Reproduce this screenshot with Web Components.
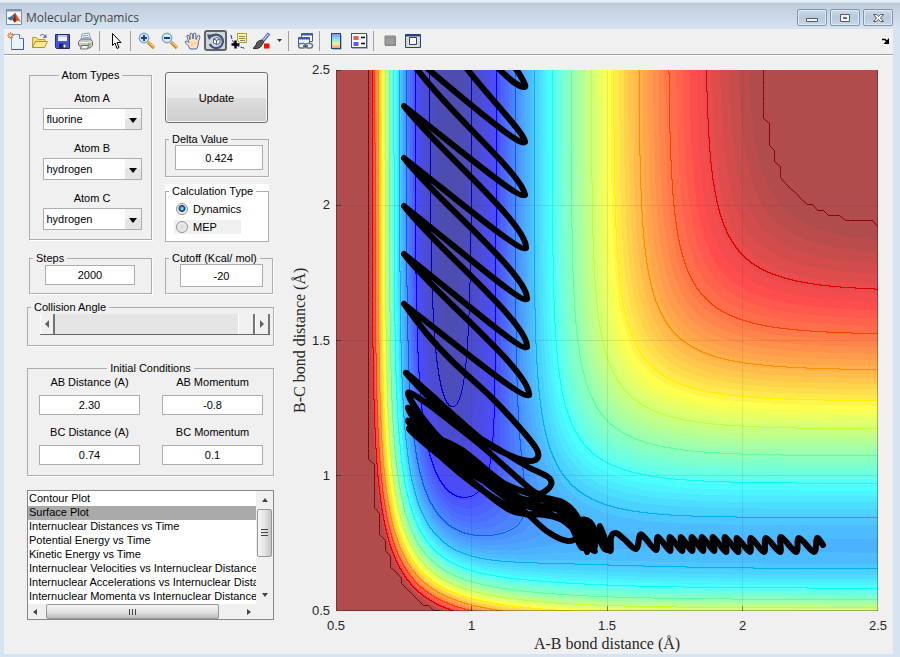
<!DOCTYPE html>
<html lang="en">
<head>
<meta charset="utf-8">
<title>Molecular Dynamics</title>
<style>
html, body { margin: 0; height: 100%; }
body { font-family: "Liberation Sans", Arial, sans-serif; font-size: 11px; line-height: 14px; color: #000; background: #d6e4f2; }
</style>
</head>
<body>
<md-window></md-window>
<script>
const define = (name, html, setup) => {
  const tpl = document.createElement('template');
  tpl.innerHTML = html;
  customElements.define(name, class extends HTMLElement {
    constructor() {
      super();
      this.attachShadow({ mode: 'open' }).append(tpl.content.cloneNode(true));
    }
    connectedCallback() {
      if (setup && !this.ready) { this.ready = true; setup(this, this.shadowRoot); }
    }
  });
};

/* ---------- toolbar icons, 18 x 18 grid ---------- */
const zoomGlass = sign => `
  <path d="M10 10l6 6" stroke="#c98a2c" stroke-width="3.4"/><path d="M10.500 9.500l6 6" stroke="#f7c66d" stroke-width="1.500"/>
  <circle cx="6" cy="6" r="4.700" fill="#d3ecfb" stroke="#7fa6c9" stroke-width="1.500"/>
  <path d="${sign}" stroke="#1d3f86" stroke-width="2"/>`;
const ICONS = {
  new: `<path d="M4.500 2.500h8l4 4v11h-12z" fill="#eaf3fd" stroke="#7f9cc4"/><path d="M12.500 2.500v4h4" fill="#fff" stroke="#5a7ba8"/>
    <path d="M16.500 7v10.500h-12" fill="none" stroke="#3f5f93"/>
    <path d="M3.500 0v7M0 3.500h7M1 1l5 5M6 1l-5 5" stroke="#e08a66"/><circle cx="3.500" cy="3.500" r="1.800" fill="#ffe9c0" stroke="#d9683c"/>`,
  open: `<path d="M2.500 15.500v-10h4l1.500 2h7v3" fill="#f7dd7c" stroke="#c29d2a"/><path d="M2.500 15.500l3-6h12l-3 6z" fill="#ffe991" stroke="#b8921f"/>
    <path d="M10 3.500q3-2.500 5.500.5" fill="none" stroke="#55789f"/><path d="M16.500 2v4h-4z" fill="#55789f"/>`,
  save: `<path d="M2.500 2.500h14v14h-13l-1-1z" fill="#4a52d8" stroke="#25297e"/><path d="M5 3h9v6h-9z" fill="#eef1ff"/><path d="M5 3h9v2h-9z" fill="#bfc6f4"/>
    <path d="M6 11.500h7v5h-7z" fill="#222662"/><path d="M10.500 12.500h2v3h-2z" fill="#fff"/>`,
  print: `<path d="M5 8l1-6 7-1 2 7z" fill="#e6f2fd" stroke="#8aa0b8"/><path d="M7 4l5-.5M7 6l6-.5" stroke="#7aa0d0"/>
    <path d="M2.500 9.500l3-2.500h9l2 2.500v4l-2.500 2.500h-8.500l-3-3z" fill="#c3c3c0" stroke="#6e6e6c"/><path d="M3 10.500h9l4-1" fill="none" stroke="#f6f6f4"/>
    <path d="M5.500 13.500h7l-1 3.500h-7z" fill="#f2f2ee" stroke="#6e6e6c"/><path d="M12 12h2" stroke="#5cab3a" stroke-width="1.500"/>`,
  pointer: `<path d="M5.500 1.500v12l2.500-2.500 2 5.500 2-1-2-5h4z" fill="#fff" stroke="#000"/>`,
  zoomin: zoomGlass('M3 6h6M6 3v6'),
  zoomout: zoomGlass('M3 6h6'),
  pan: `<path d="M6 17q-1-3-4-5.500q-2-2 0-2.500 1.500 0 3 1.500L3 5q-.5-2 1-2t2 4.500L6 3q.200-2 1.500-2t1.500 6L9.500 2q.500-1.500 1.700-1T12 7.500L13.500 4q1-1.500 2-.5t-1 6q0 5-2 7.500z" fill="#ffe0bd" stroke="#4b6ba8"/>
    <path d="M8 10v4M11 10v3" stroke="#eeb98c"/>`,
  rotate: `<path d="M4.300 4.500a6.800 6.800 0 1 1-1.500 7.500" fill="none" stroke="#3f5378" stroke-width="2.200"/><path d="M0 2.500h7l-5 5.500z" fill="#3f5378"/>
    <path d="M6.500 7l3.500-1.500 3 1.500v4l-3 1.500-3.500-1.500zM6.500 7l3 1.500 3.500-1.500M9.500 8.500v4" fill="#fff" stroke="#4b628b"/>`,
  cursor: `<path d="M7.500 1.500h9v9h-7l-2-2z" fill="#fbf3a0" stroke="#a69a3a"/><path d="M9 4.500h6M9 6.500h6M10 8.500h5" stroke="#8f8a54"/>
    <path d="M1 3q1 6 4 9t11 4.500" fill="none" stroke="#1818e0" stroke-dasharray="4 1.500"/><path d="M5.500 8.500v8M1.500 12.500h8" stroke="#000" stroke-width="2.400"/>`,
  brush: `<path d="M16 1.500L9 10" stroke="#4055a8" stroke-width="3.200"/><path d="M15.500 2L9.500 9" stroke="#c8d4f5" stroke-width="1.200"/>
    <path d="M9.500 8l-3 .5q-3 1-3.500 4.500l-3 3.500q5 1 7.500-1.500l3-4.500z" fill="#5a5a5a" stroke="#2e2e2e"/><path d="M11 11.500h5.500v5h-5.500z" fill="#fb0707"/>`,
  link: `<path d="M5.500 1.500h11v8h-11z" fill="#fff" stroke="#3f5c99"/><path d="M5.500 2.500h11" stroke="#3f5c99" stroke-width="2"/>
    <path d="M2.500 5.500h11v8h-11z" fill="#e9f1fc" stroke="#3f5c99"/><path d="M2.500 6.500h11" stroke="#3f5c99" stroke-width="2"/>
    <rect x="2.500" y="11.500" width="7" height="4.500" rx="2.200" fill="#eee" stroke="#6a7682" stroke-width="1.500"/><rect x="9.500" y="11.500" width="7" height="4.500" rx="2.200" fill="#eee" stroke="#6a7682" stroke-width="1.500"/><path d="M7 14h5" stroke="#46525e" stroke-width="1.500"/>`,
  colorbar: `<defs><linearGradient id="cb" x1="0" y1="0" x2="0" y2="1"><stop offset="0" stop-color="#8c8cf0"/><stop offset=".4" stop-color="#90e6ee"/><stop offset=".7" stop-color="#f3ee98"/><stop offset="1" stop-color="#f28e88"/></linearGradient></defs>
    <rect x="4.500" y="1.500" width="9" height="15" fill="url(#cb)" stroke="#27437c"/><path d="M14.500 3v14.500h-9" fill="none" stroke="#b4bac4"/>`,
  legend: `<rect x="1.500" y="1.500" width="15" height="14" fill="#fafcff" stroke="#3a5591"/><path d="M2 16.500h15.500v-14" fill="none" stroke="#aab2c0"/>
    <path d="M3.500 4h5v4h-5z" fill="#e65b5b"/><path d="M3.500 10h5v4h-5z" fill="#6161e0"/><path d="M11 5.500h4M11 11.500h4" stroke="#000" stroke-width="1.500"/>`,
  hide: `<path d="M4 4h11v10h-11z" fill="#8a8a8a"/><path d="M4 4h10v9h-10z" fill="#9d9d9d" stroke="#858585"/><path d="M5 6h8" stroke="#888"/>`,
  show: `<path d="M1.500 2.500h15v13h-15z" fill="#e4e4da" stroke="#27437c"/><path d="M1.500 3.500h15" stroke="#27437c" stroke-width="2"/>
    <path d="M3 7v7M15 7v7" stroke="#b6b6a8" stroke-dasharray="1 1"/><path d="M5.500 5.500h7v7h-7z" fill="#fff" stroke="#27437c"/>`
};

define('tool-button', `
<style>
:host { display: block; }
button { box-sizing: border-box; width: 23px; height: 23px; padding: 1px; border: 1px solid transparent; border-radius: 3px; background: none; display: grid; place-items: center; }
:host([active]) button { border: 2px solid #606468; padding: 0; height: 21px; background: #d2d5d9; }
svg { width: 18px; height: 18px; display: block; fill: none; }
</style>
<button type="button"><svg viewBox="0 0 18 18"></svg></button>`, (el, root) => {
  root.querySelector('svg').innerHTML = ICONS[el.getAttribute('icon')];
  root.querySelector('button').setAttribute('aria-label', el.getAttribute('icon'));
  if (el.hasAttribute('active')) root.querySelector('button').setAttribute('aria-pressed', 'true');
});

define('tool-bar', `
<style>
:host { display: flex; align-items: center; box-sizing: border-box; height: 26px; padding-bottom: 2px; background: #f0f0f0; border-bottom: 1px solid #a0a0a0; box-shadow: 0 1px 0 #fff; }
i { width: 1px; height: 20px; margin: 0 4px 0 3px; background: #a0a0a0; }
.drop { width: 12px; height: 23px; padding: 0; border: 0; background: none; display: grid; place-items: center; }
.dock { margin-left: auto; width: 14px; height: 16px; padding: 0; border: 0; background: none; }
svg { display: block; margin: auto; }
</style>
<tool-button icon="new"></tool-button><tool-button icon="open"></tool-button><tool-button icon="save"></tool-button><tool-button icon="print"></tool-button><i></i>
<tool-button icon="pointer"></tool-button><i></i>
<tool-button icon="zoomin"></tool-button><tool-button icon="zoomout"></tool-button><tool-button icon="pan"></tool-button><tool-button icon="rotate" active></tool-button><tool-button icon="cursor"></tool-button><tool-button icon="brush"></tool-button>
<button class="drop" type="button" aria-label="brush colour"><svg width="5" height="3"><path d="M0 0h5L2.500 3z" fill="#333"/></svg></button><i></i>
<tool-button icon="link"></tool-button><i></i>
<tool-button icon="colorbar"></tool-button><tool-button icon="legend"></tool-button><i></i>
<tool-button icon="hide"></tool-button><tool-button icon="show"></tool-button>
<button class="dock" type="button" aria-label="dock"><svg width="8" height="6" viewBox="0 0 8 6"><path d="M0 1.500h3l2.500 2.500" fill="none" stroke="#000" stroke-width="1.500"/><path d="M7 0v6H1.500z"/></svg></button>`);

define('title-bar', `
<style>
:host { display: flex; align-items: center; height: 29px; padding: 0 7px 0 6px; background: linear-gradient(#e6eef6 0 2px, #bdcbdb 3px, #d6e4f2); }
h1 { margin: 6px 0 0 4px; font: 12px/16px "Open Sans", "Noto Sans", sans-serif; color: #454545; flex: 1; }
.logo { margin-top: 5px; }
.logo, button svg { display: block; }
.keys { display: flex; gap: 3px; margin-top: 6px; }
button { box-sizing: border-box; width: 30px; height: 17px; padding: 0; border: 1px solid #8494ac; border-radius: 2px; background: linear-gradient(#cbd9e8, #b9c9dc 50%, #c9d8e8); box-shadow: inset 0 0 0 1px #dfe9f3; display: grid; place-items: center; }
</style>
<svg class="logo" width="16" height="16" viewBox="0 0 16 16"><path d="M.5.5h15v15H.5z" fill="#f6f6f8" stroke="#7d8ea8"/><path d="M.5.5h15v2H.5z" fill="#7f94b8"/>
<path d="M1 9l4-1.500L9 4 6.500 11 4.500 11.500z" fill="#2f73ae"/><path d="M9 3.500L15 13l-3-1.500-3.500 2-2-2.500z" fill="#d95b1c"/><path d="M9 3.500l1 8.500-1.500 1.500L7 11z" fill="#8b1f12"/></svg>
<h1>Molecular Dynamics</h1>
<div class="keys">
<button type="button" aria-label="Minimize"><svg width="12" height="10"><path d="M.5 5.500h11v3h-11z" fill="#f4f4f4" stroke="#555b66"/></svg></button>
<button type="button" aria-label="Maximize"><svg width="12" height="10"><path d="M1.500 1.500h9v7h-9z" fill="#f4f4f4" stroke="#555b66"/><path d="M4.500 4.500h3v1h-3z" fill="none" stroke="#555b66"/></svg></button>
<button type="button" aria-label="Close"><svg width="13" height="10"><path d="M1.500 1.500h3L6.500 3.500 8.500 1.500h3L8.500 5l3 3.500h-3L6.500 6.500 4.500 8.500h-3L4.500 5z" fill="#f4f4f4" stroke="#555b66"/></svg></button>
</div>`);

/* ---------- form pieces ---------- */
define('group-box', `
<style>
:host { display: block; }
fieldset { box-sizing: border-box; height: 100%; min-width: 0; margin: 0; padding: 0 8px 8px; border: 1px solid #adadad; box-shadow: 1px 1px 0 #fff; }
legend { padding: 0 3px; height: 14px; }
:host([center]) legend { margin: 0 auto; }
:host(:not([center])) legend { margin-left: -5px; }
:host([white]) { background: #fff; }
:host([white]) fieldset { box-shadow: none; }
</style>
<fieldset><legend></legend><slot></slot></fieldset>`, (el, root) => {
  root.querySelector('legend').textContent = el.getAttribute('label');
});

define('atom-select', `
<style>
:host { display: grid; justify-items: center; }
label { margin-bottom: 3px; }
.box { display: grid; width: 99px; }
select, svg { grid-area: 1 / 1; }
select { appearance: none; box-sizing: border-box; width: 100%; height: 22px; padding: 0 18px 0 3px; margin: 0; border: 1px solid #abadb3; border-radius: 0; background: #fff; font: inherit; color: #000; }
svg { justify-self: end; align-self: center; margin-right: 1px; pointer-events: none; }
</style>
<label for="s"></label>
<div class="box"><select id="s"></select>
<svg width="16" height="20"><path d="M0 0h16v20H0z" fill="#e4e4e4"/><path d="M0 0h16v10H0z" fill="#f2f2f2"/><path d="M4 9h8l-4 5z"/></svg></div>`, (el, root) => {
  root.querySelector('label').textContent = el.getAttribute('label');
  const s = root.querySelector('select');
  for (const v of ['hydrogen', 'fluorine']) s.add(new Option(v, v, false, v === el.getAttribute('value')));
});

define('value-field', `
<style>
:host { display: grid; justify-items: center; }
label { margin-bottom: 6px; }
label:empty { display: none; }
input { box-sizing: border-box; width: 100%; height: var(--h, 20px); margin: 0; padding: 0; border: 1px solid #abadb3; background: #fff; text-align: center; font: inherit; color: #000; }
</style>
<label for="f"></label><input id="f" type="text">`, (el, root) => {
  const input = root.querySelector('input');
  input.value = el.getAttribute('value');
  root.querySelector('label').textContent = el.getAttribute('label') || '';
  if (el.hasAttribute('name')) input.setAttribute('aria-label', el.getAttribute('name'));
});

define('calc-type', `
<style>
:host { display: grid; gap: 4px; padding-top: 4px; }
label { display: flex; align-items: center; gap: 5px; height: 14px; padding-left: 2px; }
label + label { width: 65px; background: #f0f0f0; }
input { appearance: none; box-sizing: border-box; width: 12px; height: 12px; margin: 0; border: 1px solid #8e8f8f; border-radius: 50%; background: radial-gradient(#d8d8d8, #f8f8f8); }
input:checked { background: radial-gradient(circle at 50% 45%, #7fd0f4 0 1px, #1c6e9f 2px, #123a5c 3px, #eee 4px); }
</style>
<label><input type="radio" name="t" checked>Dynamics</label>
<label><input type="radio" name="t">MEP</label>`);

define('angle-slider', `
<style>
:host { display: flex; height: 20px; border-bottom: 1px solid #696969; margin: 0 -5px 0 4px; }
button { box-sizing: border-box; width: 15px; height: 20px; padding: 0; border: 0; border-right: 2px solid #757575; border-left: 1px solid #fff; background: #f0f0f0; display: grid; place-items: center; flex: none; }
input { appearance: none; flex: 1; min-width: 0; height: 20px; margin: 0; background: #e5e5e5; }
input::-webkit-slider-thumb { appearance: none; box-sizing: border-box; width: 17px; height: 20px; background: #f0f0f0; border: 0; border-left: 1px solid #fff; border-right: 2px solid #757575; border-radius: 0; }
svg { display: block; fill: #606060; }
</style>
<button type="button" aria-label="Decrease"><svg width="4" height="8"><path d="M4 0v8L0 4z"/></svg></button>
<input type="range" aria-label="Collision Angle" min="0" max="180" value="180">
<button type="button" aria-label="Increase"><svg width="4" height="8"><path d="M0 0v8l4-4z"/></svg></button>`);

define('plot-list', `
<style>
:host { display: grid; grid-template-columns: minmax(0, 1fr) 17px; border: 1px solid #828790; background: #f0f0f0; }
select { appearance: none; box-sizing: border-box; width: 100%; height: 113px; border: 0; border-radius: 0; margin: 0; padding: 1px 0 0; background: #fff; font: inherit; color: #000; overflow: hidden; scrollbar-width: none; outline: 0; }
option { height: 14px; min-height: 14px; padding: 0 1px; line-height: 14px; overflow: hidden; }
option:checked { background: #aaa linear-gradient(#aaa, #aaa); color: #000; }
.v, .h { display: flex; align-items: center; }
.v { flex-direction: column; padding: 7px 0; }
.h { padding: 0 5px; height: 15px; }
.thumb { display: grid; place-items: center; border: 1px solid #979797; border-radius: 2px; box-sizing: border-box; }
.v .thumb { width: 15px; height: 48px; margin: 7px 0 auto; background: linear-gradient(90deg, #f5f5f5, #e4e4e4 50%, #c4c4c4); }
.h .thumb { width: 173px; height: 15px; margin: 0 auto 0 9px; background: linear-gradient(#f5f5f5, #e4e4e4 50%, #bcbcbc); }
svg { display: block; fill: #444; }
</style>
<select size="8" aria-label="Plot type">
<option>Contour Plot</option><option selected>Surface Plot</option><option>Internuclear Distances vs Time</option><option>Potential Energy vs Time</option><option>Kinetic Energy vs Time</option><option>Internuclear Velocities vs Internuclear Distance</option><option>Internuclear Accelerations vs Internuclear Distance</option><option>Internuclear Momenta vs Internuclear Distance</option>
</select>
<div class="v"><svg width="6" height="4"><path d="M0 4h6L3 0z"/></svg><div class="thumb"><svg width="7" height="8"><path d="M0 0h7v1H0zM0 3h7v1H0zM0 6h7v1H0z"/></svg></div><svg width="6" height="4"><path d="M0 0h6L3 4z"/></svg></div>
<div class="h"><svg width="4" height="6"><path d="M4 0v6L0 3z"/></svg><div class="thumb"><svg width="8" height="6"><path d="M0 0h1v6H0zM3 0h1v6H3zM6 0h1v6H6z"/></svg></div><svg width="4" height="6"><path d="M0 0v6l4-3z"/></svg></div>
<div></div>`);

define('control-panel', `
<style>
:host { display: flex; flex-direction: column; width: 247px; }
.top { display: grid; grid-template-columns: 123px 108px; column-gap: 13px; margin-left: 2px; }
.atoms { height: 172px; }
.stack { display: grid; gap: 11px; padding: 9px 0 0 3px; }
.col { width: 104px; display: grid; gap: 7px; align-content: start; padding-top: 4px; }
.update { height: 51px; padding: 0; border: 1px solid #707070; border-radius: 3px; background: linear-gradient(#f2f2f2, #ebebeb 50%, #ddd 51%, #cfcfcf); box-shadow: inset 0 0 0 1px #f6f6f6; font: inherit; color: #000; margin-right: 1px; }
.delta { height: 45px; margin-top: 2px; }
.calc { height: 58px; }
.steps, .cutoff { height: 43px; margin-top: 9px; }
.delta value-field { --h: 25px; margin: -1px -3px 0 1px; }
.steps value-field { width: 90px; margin: 0 0 0 7px; }
.cutoff value-field { --h: 23px; width: 83px; margin: -1px 0 0 6px; }
.angle { height: 46px; margin-top: 6px; }
.init { height: 115px; margin-top: 15px; }
.fields { display: grid; grid-template-columns: 101px 101px; justify-content: space-between; row-gap: 10px; padding: 0 2px 0 3px; }
plot-list { margin-top: 14px; }
</style>
<div class="top">
  <group-box class="atoms" label="Atom Types" center><div class="stack">
    <atom-select label="Atom A" value="fluorine"></atom-select>
    <atom-select label="Atom B" value="hydrogen"></atom-select>
    <atom-select label="Atom C" value="hydrogen"></atom-select></div></group-box>
  <div class="col">
    <button class="update" type="button">Update</button>
    <group-box class="delta" label="Delta Value"><value-field name="Delta Value" value="0.424"></value-field></group-box>
    <group-box class="calc" label="Calculation Type" white><calc-type></calc-type></group-box>
  </div>
  <group-box class="steps" label="Steps"><value-field name="Steps" value="2000"></value-field></group-box>
  <group-box class="cutoff" label="Cutoff (Kcal/ mol)"><value-field name="Cutoff" value="-20"></value-field></group-box>
</div>
<group-box class="angle" label="Collision Angle"><angle-slider></angle-slider></group-box>
<group-box class="init" label="Initial Conditions" center><div class="fields">
  <value-field label="AB Distance (A)" value="2.30"></value-field><value-field label="AB Momentum" value="-0.8"></value-field>
  <value-field label="BC Distance (A)" value="0.74"></value-field><value-field label="BC Momentum" value="0.1"></value-field></div></group-box>
<plot-list></plot-list>`);

/* ---------- energy surface ---------- */
const CUTOFF = -21.9, FLOOR = -141.2, DELTA = 0.424 ** 2;
const pairs = { hf: [141.2, 2.2187, 0.917], hh: [109.4, 1.942, 0.742] };
const integrals = ([D, b, r0], r) => {
  const e = Math.exp(-b * (r - r0)), e2 = e * e;
  return [D / 4 * ((3 + DELTA) * e2 - (2 + 6 * DELTA) * e), D / 4 * ((1 + 3 * DELTA) * e2 - (6 + 2 * DELTA) * e)];
};
/* LEPS potential of collinear F-H-H, kcal/mol */
const energy = (ab, bc) => {
  const [q1, j1] = integrals(pairs.hf, ab), [q2, j2] = integrals(pairs.hh, bc), [q3, j3] = integrals(pairs.hf, ab + bc);
  return (q1 + q2 + q3 - Math.sqrt(((j1 - j2) ** 2 + (j2 - j3) ** 2 + (j3 - j1) ** 2) / 2)) / (1 + DELTA);
};
const ramp = v => Math.max(0, Math.min(1, v));
const jet = t => {
  const i = Math.max(0, Math.min(62, Math.floor(t * 64))), u = (i + 1) / 64;
  return [1.5 - Math.abs(4 * u - 3), 1.5 - Math.abs(4 * u - 2), 1.5 - Math.abs(4 * u - 1)].map(ramp);
};
const tone = v => (v - FLOOR) / (-20 - FLOOR);
const paintSurface = canvas => {
  const W = canvas.width, H = canvas.height, ctx = canvas.getContext('2d'), img = ctx.createImageData(W, H);
  const V = new Float64Array((W + 1) * (H + 1));
  for (let y = 0; y <= H; y++) for (let x = 0; x <= W; x++)
    V[y * (W + 1) + x] = Math.min(CUTOFF, energy(0.5 + x / 271, 0.5 + (H - y) / 271));
  const put = (x, y, c) => img.data.set([c[0] * 255, c[1] * 255, c[2] * 255, 255], (y * W + x) * 4);
  for (let y = 0; y < H; y++) for (let x = 0; x < W; x++) {
    const a = V[y * (W + 1) + x], r = V[y * (W + 1) + x + 1], d = V[(y + 1) * (W + 1) + x];
    let c = jet(tone(a)).map(k => k * 0.7 + 0.3);
    for (let k = 0; k < 11; k++) {
      const L = -137 + 10.45 * k;
      if ((a < L) !== (r < L) || (a < L) !== (d < L)) c = jet(tone(L));
    }
    put(x, y, c);
  }
  ctx.putImageData(img, 0, 0);
  /* cutoff boundary follows the coarse sampling grid */
  const n = 101, s = (W - 1) / (n - 1), top = (i, j) => energy(0.5 + i * 0.02, 0.5 + j * 0.02) >= CUTOFF;
  ctx.strokeStyle = '#8b0000'; ctx.lineWidth = 1; ctx.beginPath();
  const at = (i, j) => [Math.round(i * s) + 0.5, Math.round(H - 1 - j * s) + 0.5];
  for (let i = 0; i < n - 1; i++) for (let j = 0; j < n - 1; j++) {
    const c = [[i, j], [i + 1, j], [i + 1, j + 1], [i, j + 1]], f = c.map(p => top(...p)), k = f.filter(Boolean).length;
    if (k === 3) { const o = f.indexOf(false); ctx.moveTo(...at(...c[(o + 1) % 4])); ctx.lineTo(...at(...c[(o + 3) % 4])); }
    if (k === 2) { for (let q = 0; q < 4; q++) if (f[q] && f[(q + 1) % 4]) { ctx.moveTo(...at(...c[q])); ctx.lineTo(...at(...c[(q + 1) % 4])); } }
  }
  ctx.stroke();
};

/* ---------- trajectory ---------- */
const smooth = p => {
  let d = `M${p[0]}`;
  for (let i = 0; i < p.length - 1; i++) {
    const a = p[i - 1] || p[i], b = p[i], c = p[i + 1], e = p[i + 2] || c;
    d += `C${b[0] + (c[0] - a[0]) / 6} ${b[1] + (c[1] - a[1]) / 6} ${c[0] - (e[0] - b[0]) / 6} ${c[1] - (e[1] - b[1]) / 6} ${c}`;
  }
  return d;
};
const trajectory = () => {
  const L = [[404, 106], [404, 158], [404, 206], [404, 254], [404, 304], [406, 373]];
  const R = [[525, 195], [526, 248], [527, 299], [527, 347], [529, 395]];
  let d = 'M516 69C522 78 528 88 524 87C517 86 510 80 499 69M467 69C494 103 526 135 525 142C522 146 500 130 428 69M417 69C450 114 522 174 525 195';
  R.forEach(([x, y], i) => {
    const [lx, ly] = L[i];
    d += `M${x} ${y}C${x - 6} ${y + 5} ${lx + 56} ${ly + 44} ${lx} ${ly}`;
    if (R[i + 1]) { const [u, v] = R[i + 1]; d += `C${lx + 28} ${ly + 38} ${u + 2} ${v - 24} ${u} ${v}`; }
  });
  const knots = [[404, 304], [427, 334], [452, 361], [492, 398], [520, 428], [536, 448], [538, 457], [531, 461], [514, 457], [488, 444], [458, 419], [428, 392], [406, 373],
    [438, 406], [472, 433], [505, 453], [528, 467], [548, 477], [551, 485], [542, 493], [533, 491], [512, 473], [478, 443], [445, 417], [425, 402], [408, 393],
    [422, 417], [445, 443], [485, 473], [512, 487], [538, 496], [562, 502], [575, 513], [585, 533], [595, 551], [582, 540], [568, 523], [545, 512], [518, 502], [485, 476], [445, 446], [425, 424], [408, 408],
    [425, 433], [462, 463], [495, 490], [525, 512], [548, 532], [568, 541], [577, 535], [562, 520], [540, 514], [522, 513], [482, 490], [438, 454], [408, 421],
    [428, 439], [462, 468], [505, 492], [538, 505], [565, 512], [577, 528], [587, 552], [580, 530], [562, 505], [540, 497], [505, 484], [462, 450], [432, 436], [409, 429],
    [440, 456], [475, 484], [512, 511], [545, 515], [575, 524], [592, 548], [594, 540], [582, 522], [570, 520], [562, 507], [545, 500], [520, 498], [480, 470], [430, 430]];
  d += smooth(knots);
  d += smooth([[540, 498], [556, 508], [570, 524], [582, 548], [580, 522], [590, 522], [598, 537], [605, 549], [600, 526], [610, 551], [611, 537], [616, 533], [624, 539], [636, 549], [640, 535], [645, 538], [656, 550], [658, 537], [670, 551], [670, 537], [682, 551], [681, 537], [692, 551], [692, 537], [703, 551], [702, 537], [714, 551], [713, 537], [726, 552], [725, 537], [738, 552], [737, 538], [750, 552], [751, 538], [764, 552], [766, 538], [780, 552], [781, 537], [796, 552], [799, 538], [814, 552], [817, 538], [823, 545]]);
  d += smooth([[575, 515], [583, 528], [592, 545], [598, 530], [607, 550]]);
  return d;
};

define('energy-plot', `
<style>
:host { display: grid; grid-template-columns: 18px 22px minmax(0, 1fr); align-content: start; color: #262626; font-size: 13px; line-height: 16px; }
.plot { grid-area: 1 / 3; display: grid; margin-left: 6px; aspect-ratio: 542 / 541; }
canvas, .over { grid-area: 1 / 1; width: 100%; height: 100%; display: block; }
.y, .x { display: flex; justify-content: space-between; }
.y { grid-area: 1 / 2; flex-direction: column; }
.y span { height: 0; display: flex; align-items: center; justify-content: flex-end; }
.x { grid-area: 2 / 3; margin: 7px 0 0 6px; }
.x span { width: 0; display: flex; justify-content: center; }
.label { font: 16px/20px "Liberation Serif", "Times New Roman", serif; white-space: nowrap; }
.yl { grid-area: 1 / 1; writing-mode: vertical-rl; transform: rotate(180deg); text-align: center; }
.xl { grid-area: 3 / 3; text-align: center; padding-left: 6px; }
</style>
<div class="label yl">B-C bond distance (Å)</div>
<div class="y"><span>2.5</span><span>2</span><span>1.5</span><span>1</span><span>0.5</span></div>
<div class="plot"><canvas width="542" height="541"></canvas>
<svg class="over" viewBox="336 70 542 541" fill="none" role="img" aria-label="Trajectory">
<path d="M471.500 70v541M607.500 70v541M742.500 70v541M336 205.500h542M336 340.500h542M336 475.500h542" stroke="#262626" stroke-opacity=".1"/>
<path d="M336.500 70v540.500h541.500M877.500 70v541" stroke="#000" stroke-opacity=".3"/>
<path d="M471.500 611v-5M607.500 611v-5M742.500 611v-5M336 70.500h5M336 205.500h5M336 340.500h5M336 475.500h5" stroke="#000" stroke-opacity=".4"/>
<path class="run" stroke="#000" stroke-width="6" stroke-linejoin="round" stroke-linecap="round"/></svg></div>
<div class="x"><span>0.5</span><span>1</span><span>1.5</span><span>2</span><span>2.5</span></div>
<div class="label xl">A-B bond distance (Å)</div>`, (el, root) => {
  paintSurface(root.querySelector('canvas'));
  root.querySelector('.run').setAttribute('d', trajectory());
});

define('md-window', `
<style>
:host { display: flex; flex-direction: column; min-height: 100vh; box-sizing: border-box; background: #d6e4f2; padding-bottom: 4px; }
main { flex: 1; display: flex; flex-direction: column; margin: 0 7px 0 4px; background: #f0f0f0; }
.body { display: flex; padding: 0 15px 0 23px; }
control-panel { flex: none; margin-top: 13px; }
energy-plot { flex: 1; margin: 15px 0 0 16px; }
</style>
<title-bar></title-bar>
<main><tool-bar></tool-bar><div class="body"><control-panel></control-panel><energy-plot></energy-plot></div></main>`);
</script>
</body>
</html>
